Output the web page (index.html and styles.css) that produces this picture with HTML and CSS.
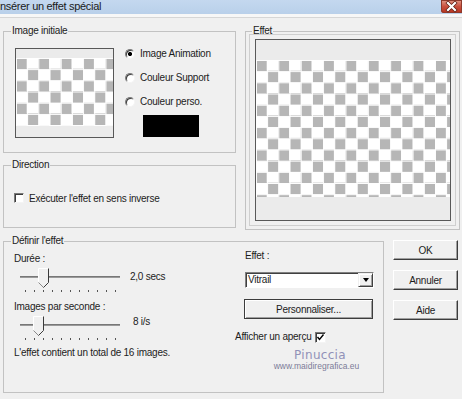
FILE: index.html
```html
<!DOCTYPE html>
<html lang="fr">
<head>
    <meta charset="UTF-8">
    <meta name="viewport" content="width=device-width, initial-scale=1.0">
    <title>Insérer un effet spécial</title>
    <link rel="stylesheet" href="styles.css">
</head>
<body>

    <div class="window">
        <div class="titlebar">
            <span class="title">nsérer un effet spécial</span>
            <span class="close">
                <svg width="21" height="13" viewBox="0 0 21 13">
                    <path d="M7 3 L14 10 M14 3 L7 10" stroke="#5a1a10" stroke-width="3.6" stroke-linecap="square"/>
                    <path d="M7 3 L14 10 M14 3 L7 10" stroke="#fff" stroke-width="2.2" stroke-linecap="square"/>
                </svg>
            </span>
        </div>
        <div class="frame"></div>

        <div class="dialog">
            <div class="top">

                <div class="left-col">
                    <fieldset class="group group-initial">
                        <legend>Image initiale</legend>
                        <div class="initial-body">
                            <div class="preview preview-small">
                                <div class="band band-top"></div>
                                <div class="checker"></div>
                            </div>
                            <div class="options">
                                <div class="option"><span class="radio checked"></span>Image Animation</div>
                                <div class="option"><span class="radio"></span>Couleur Support</div>
                                <div class="option"><span class="radio"></span>Couleur perso.</div>
                                <div class="swatch"></div>
                            </div>
                        </div>
                    </fieldset>

                    <fieldset class="group group-direction">
                        <legend>Direction</legend>
                        <div class="direction-body">
                            <span class="check"></span>
                            <span>Exécuter l'effet en sens inverse</span>
                        </div>
                    </fieldset>
                </div>

                <fieldset class="group group-effect">
                    <legend>Effet</legend>
                    <div class="effect-inner">
                        <div class="preview preview-large">
                            <div class="band band-top"></div>
                            <div class="checker"></div>
                        </div>
                    </div>
                </fieldset>

            </div>

            <div class="bottom">
                <fieldset class="group group-define">
                    <legend>Définir l'effet</legend>
                    <div class="define-body">

                        <div class="define-left">
                            <div class="line first">Durée :</div>
                            <div class="slider-row">
                                <div class="slider">
                                    <div class="track"></div>
                                    <svg class="thumb" style="left: 18px" width="11" height="20" viewBox="0 0 11 20">
                                        <polygon points="0.5,0.5 10.5,0.5 10.5,14.5 5.5,19.5 0.5,14.5" fill="#f0f0f0"/>
                                        <polyline points="0.5,14.5 0.5,0.5 10.5,0.5" fill="none" stroke="#fff"/>
                                        <polyline points="0.5,14.5 5.5,19.5" fill="none" stroke="#8a8a8a"/>
                                        <polyline points="10.5,0.5 10.5,14.5 5.5,19.5" fill="none" stroke="#3a3a3a"/>
                                    </svg>
                                    <div class="ticks">
                                        <i></i><i></i><i></i><i></i><i></i><i></i><i></i><i></i><i></i><i></i><i></i>
                                    </div>
                                </div>
                                <span class="value value-secs">2,0 secs</span>
                            </div>

                            <div class="line second">Images par seconde :</div>
                            <div class="slider-row">
                                <div class="slider">
                                    <div class="track"></div>
                                    <svg class="thumb" style="left: 13px" width="11" height="20" viewBox="0 0 11 20">
                                        <polygon points="0.5,0.5 10.5,0.5 10.5,14.5 5.5,19.5 0.5,14.5" fill="#f0f0f0"/>
                                        <polyline points="0.5,14.5 0.5,0.5 10.5,0.5" fill="none" stroke="#fff"/>
                                        <polyline points="0.5,14.5 5.5,19.5" fill="none" stroke="#8a8a8a"/>
                                        <polyline points="10.5,0.5 10.5,14.5 5.5,19.5" fill="none" stroke="#3a3a3a"/>
                                    </svg>
                                    <div class="ticks">
                                        <i></i><i></i><i></i><i></i><i></i><i></i><i></i><i></i><i></i><i></i><i></i>
                                    </div>
                                </div>
                                <span class="value value-fps">8 i/s</span>
                            </div>

                            <div class="line total">L'effet contient un total de 16 images.</div>
                        </div>

                        <div class="define-right">
                            <div class="line effect-label">Effet :</div>
                            <div class="select">
                                <span class="select-text">Vitrail</span>
                                <span class="select-arrow"><span class="triangle"></span></span>
                            </div>
                            <div class="btn btn-custom">Personnaliser...</div>
                            <div class="preview-toggle">
                                <span>Afficher un aperçu</span>
                                <span class="check check-on">
                                    <svg width="9" height="9" viewBox="0 0 9 9">
                                        <path d="M1.5 4 L3.5 6.5 L7.5 1.5" fill="none" stroke="#000" stroke-width="1.4"/>
                                    </svg>
                                </span>
                            </div>
                            <div class="watermark">
                                <div class="wm-name">Pinuccia</div>
                                <div class="wm-url">www.maidiregrafica.eu</div>
                            </div>
                        </div>

                    </div>
                </fieldset>

                <div class="buttons">
                    <div class="btn">OK</div>
                    <div class="btn">Annuler</div>
                    <div class="btn">Aide</div>
                </div>
            </div>
        </div>
    </div>

</body>
</html>
```

FILE: styles.css
```css
*{box-sizing: border-box;}

body{margin: 0; background: #f0f0f0; font-family: "Liberation Sans", Arial, sans-serif; font-size: 10px; letter-spacing: -0.25px; color: #1c1c1c;}

.window{width: 462px; height: 399px; overflow: hidden; background: #f0f0f0;}

/* title bar */
.titlebar{height: 14px; display: flex; justify-content: space-between; align-items: flex-start; background: linear-gradient(#c4d8ef, #b9d0ea);}
.title{font-size: 11px; line-height: 13px; letter-spacing: -0.3px; color: #1a1a1a;}
.close{width: 21px; height: 13px; display: flex; border-radius: 0 0 0 3px; background: linear-gradient(#e39a88, #c9503e 50%, #b8321f); box-shadow: inset 0 0 0 1px #8f3a2c;}
.frame{height: 4px; background: #f7f7f7; border-bottom: 1px solid #d6d6d6;}

.dialog{padding: 7px 0 0 3px;}

/* group boxes */
.group{margin: 0; padding: 0; border: 1px solid #c2c2c2; min-width: 0;}
.group legend{margin-left: 7px; padding: 0 1px; font-size: 10px; line-height: 12px;}

.top{display: flex; gap: 9px; height: 205px;}
.left-col{width: 233px; display: flex; flex-direction: column; gap: 6px;}

.group-initial{height: 128px;}
.group-direction{height: 69px;}
.group-effect{width: 215px; height: 205px;}
.group-effect legend{margin-left: 6px;}

.initial-body{display: flex; padding: 11px 0 0 11px;}

/* previews */
.preview{display: flex; flex-direction: column; border: 1px solid #585858; background: #ebebeb;}
.preview-small{width: 99px; height: 90px;}
.preview-small .band-top{height: 9px;}
.preview-small .checker{height: 68px;}
.preview-large{width: 196px; height: 182px;}
.preview-large .band-top{height: 20px;}
.preview-large .checker{height: 137px;}

.checker{background:
    linear-gradient(90deg, #fff 1px, transparent 1px) 0 0 / 11.2px 11.2px,
    linear-gradient(#fff 1px, transparent 1px) 0 0 / 11.2px 11.2px,
    conic-gradient(#fff 25%, #b6b6b6 0 50%, #fff 0 75%, #b6b6b6 0) 0 0 / 22.4px 22.4px;}

.effect-inner{margin: -3px 3px 0 3px; height: 192px; border: 1px solid #cfcfcf; padding: 4px 0 0 5px;}

/* options */
.options{margin-left: 11px; display: flex; flex-direction: column; gap: 12px;}
.option{display: flex; align-items: center; gap: 5px; height: 12px; line-height: 12px;}
.radio{width: 10px; height: 10px; border-radius: 50%; background: #fff; border: 1px solid; border-color: #7a7a7a #f4f4f4 #f4f4f4 #7a7a7a; box-shadow: inset 1px 1px 0 #3c3c3c;}
.radio.checked{background: radial-gradient(circle, #000 0 1.7px, #fff 2.4px);}
.swatch{width: 56px; height: 22px; background: #000; margin: -5px 0 0 18px;}

.check{width: 10px; height: 10px; display: flex; align-items: center; justify-content: center; background: #fff; border: 1px solid; border-color: #7a7a7a #f4f4f4 #f4f4f4 #7a7a7a; box-shadow: inset 1px 1px 0 #3c3c3c;}
.check-on{width: 11px; height: 11px;}

.direction-body{display: flex; align-items: center; gap: 5px; height: 12px; margin: 21px 0 0 10px;}

/* bottom row */
.bottom{display: flex; margin-top: 5px;}
.group-define{width: 381px; height: 158px;}
.define-body{display: flex;}
.define-left{width: 231px; padding-left: 10px;}
.define-right{flex: 1;}

.line{line-height: 12px;}
.line.first{margin-top: 6px;}
.line.second{margin-top: 8px;}
.line.total{margin-top: 6px;}

.slider-row{display: flex; align-items: flex-start; margin: 3px 0 0 6px; height: 25px;}
.slider{position: relative; width: 100px; padding-top: 8px;}
.track{height: 2px; background: #777; border-bottom: 1px solid #9a9a9a;}
.thumb{position: absolute; top: 0;}
.ticks{display: flex; gap: 8px; padding-left: 5px; margin-top: 12px;}
.ticks i{width: 1px; height: 2px; background: #555;}
.value{line-height: 12px;}
.value-secs{margin: 3px 0 0 10px;}
.value-fps{margin: 0 0 0 13px;}

.effect-label{margin: 3px 0 0 10px;}

.select{display: flex; width: 129px; height: 16px; margin: 10px 0 0 10px; background: #fff; border: 1px solid; border-color: #808080 #fff #fff #808080; box-shadow: inset 1px 1px 0 #404040;}
.select-text{padding: 1px 0 0 2px; line-height: 12px;}
.select-arrow{margin-left: auto; width: 15px; display: flex; align-items: center; justify-content: center; background: #f0f0f0; border: 1px solid; border-color: #f0f0f0 #404040 #404040 #f0f0f0; box-shadow: inset 1px 1px 0 #fff, inset -1px -1px 0 #a0a0a0;}
.triangle{width: 0; height: 0; border-left: 3.5px solid transparent; border-right: 3.5px solid transparent; border-top: 4px solid #000;}

.btn{display: flex; align-items: center; justify-content: center; width: 65px; height: 20px; background: #f0f0f0; border: 1px solid; border-color: #fff #3c3c3c #3c3c3c #fff; box-shadow: inset -1px -1px 0 #a0a0a0;}
.btn-custom{width: 129px; margin: 11px 0 0 9px; border-color: #3c3c3c; box-shadow: inset 1px 1px 0 #fff, inset -1px -1px 0 #a0a0a0;}

.preview-toggle{display: flex; align-items: center; gap: 4px; height: 12px; margin-top: 12px; line-height: 12px;}

.watermark{width: 87px; margin: 5px 0 0 38px; text-align: center;}
.wm-name{padding-left: 7px; font-family: "DejaVu Sans", sans-serif; font-size: 12px; letter-spacing: 0.3px; line-height: 14px; color: #9292b8;}
.wm-url{font-size: 8.5px; letter-spacing: 0; line-height: 9px; color: #7c7c98;}

.buttons{display: flex; flex-direction: column; gap: 10px; margin-left: 9px; padding-top: 5px;}
```
